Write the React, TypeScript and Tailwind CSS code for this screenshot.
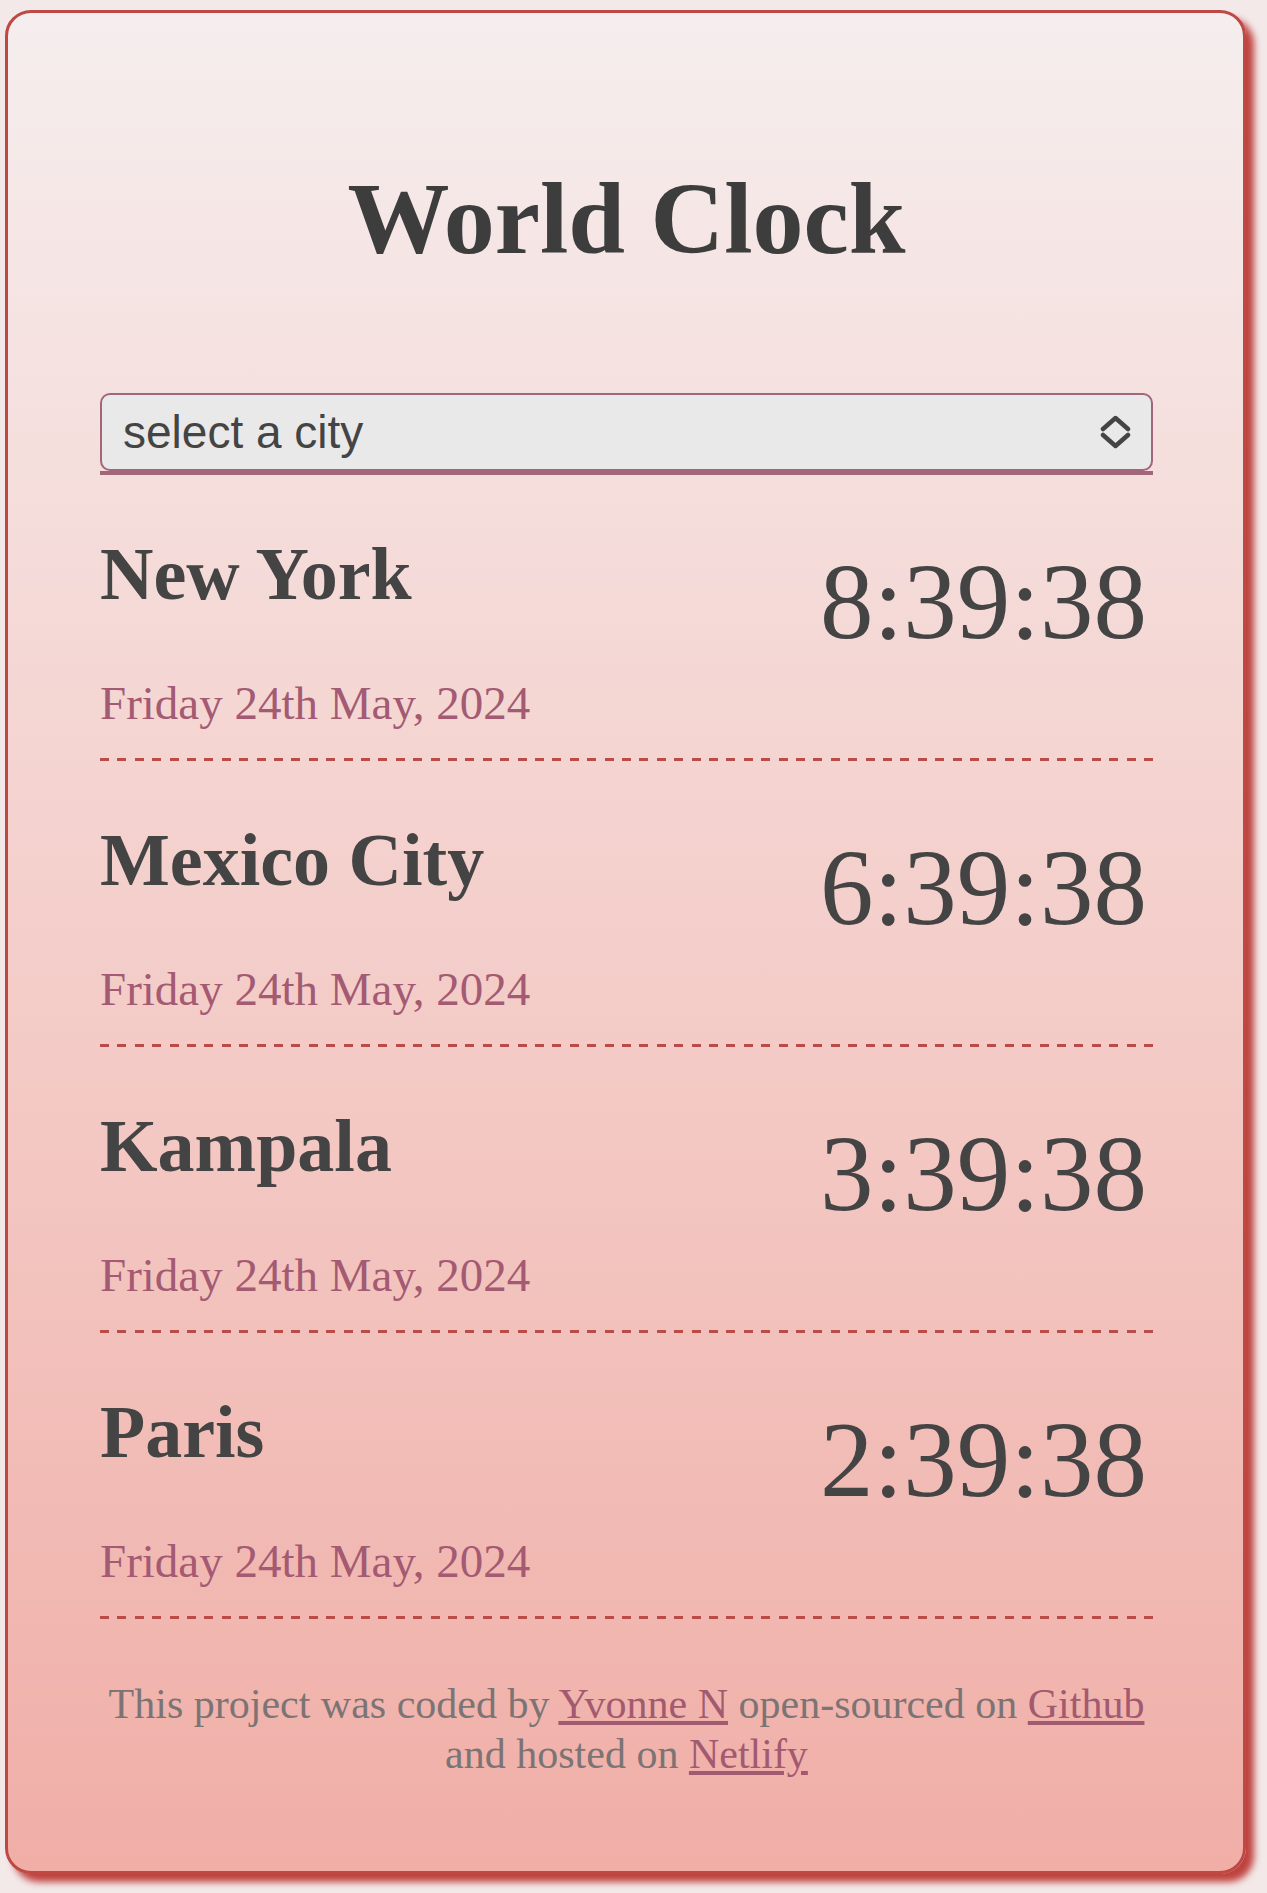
import { useState } from "react";

const cities = [
  { name: "New York", time: "8:39:38", date: "Friday 24th May, 2024" },
  { name: "Mexico City", time: "6:39:38", date: "Friday 24th May, 2024" },
  { name: "Kampala", time: "3:39:38", date: "Friday 24th May, 2024" },
  { name: "Paris", time: "2:39:38", date: "Friday 24th May, 2024" },
];

const App = () => {
  const [city, setCity] = useState("");

  return (
    <div className="min-h-screen bg-[#f3e9e9] pl-[5px] pt-[10px] pb-[19px] font-['Liberation_Serif',serif]">
      <div className="w-[1241px] rounded-[26px] border-[3px] border-[#bd4844] bg-linear-to-b from-[#f5eeee] to-[#f0aea7] pl-[92px] pr-[90px] pt-[155px] pb-[92px] shadow-[8px_8px_7px_#bf423e]">
        <h1 className="text-center text-[102px] leading-none font-bold text-[#3d3d3d]">World Clock</h1>

        {/* city picker */}
        <div className="mt-[123px] border-b-4 border-[#a3657a]">
          <div className="relative">
            <select
              value={city}
              onChange={(e) => setCity(e.target.value)}
              className="block h-[78px] w-full appearance-none rounded-[10px] border-2 border-[#a3657a] bg-[#e9e9e9] pl-[21px] font-['Liberation_Sans',sans-serif] text-[46px] text-[#444] outline-none"
            >
              <option value="">select a city</option>
              <option value="current">My current location</option>
              <option value="tokyo">Tokyo</option>
              <option value="sydney">Sydney</option>
              <option value="london">London</option>
            </select>
            <svg
              width="31"
              height="34"
              viewBox="0 0 31 34"
              fill="none"
              stroke="#444"
              strokeWidth="4.5"
              strokeLinecap="round"
              strokeLinejoin="round"
              className="pointer-events-none absolute right-[22px] top-[22px]"
            >
              <polyline points="3,14 15.5,3 28,14" />
              <polyline points="3,20 15.5,31 28,20" />
            </svg>
          </div>
        </div>

        {/* clocks */}
        <div>
          {cities.map((c) => (
            <div key={c.name}>
              <div className="flex items-start justify-between pt-[62px] pb-[31px]">
                <div>
                  <h2 className="text-[74px] leading-none font-bold text-[#444]">{c.name}</h2>
                  <div className="mt-[69px] text-[47px] leading-none text-[#a35a72]">{c.date}</div>
                </div>
                <div className="mt-[12px] pr-[6px] text-[107px] leading-none text-[#444]">{c.time}</div>
              </div>
              <div className="h-[3px] bg-[repeating-linear-gradient(to_right,#b94b48_0_9px,transparent_9px_17.4px)]" />
            </div>
          ))}
        </div>

        <p className="mt-[60px] text-center text-[42px] leading-[50px] text-[#7c7474]">
          This project was coded by{" "}
          <a href="#" className="text-[#a25a70] underline">
            Yvonne N
          </a>{" "}
          open-sourced on{" "}
          <a href="#" className="text-[#a25a70] underline">
            Github
          </a>
          <br />
          and hosted on{" "}
          <a href="#" className="text-[#a25a70] underline">
            Netlify
          </a>
        </p>
      </div>
    </div>
  );
};

export default App;
